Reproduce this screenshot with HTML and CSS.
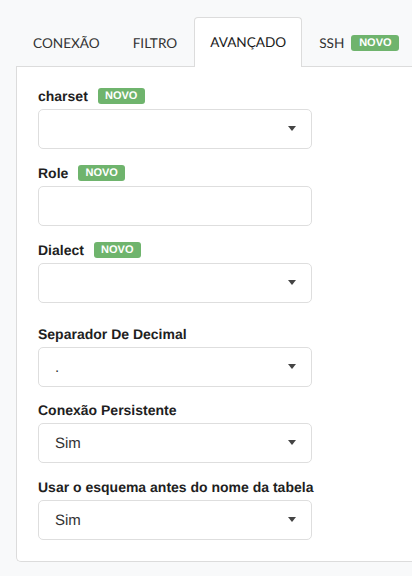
FILE: index.html
```html
<!DOCTYPE html>
<html lang="pt">
<head>
<meta charset="utf-8">
<title>Avançado</title>
<link rel="stylesheet" href="styles.css">
</head>
<body>
<div class="page">
  <ul class="tabs">
    <li class="tab">CONEXÃO</li>
    <li class="tab">FILTRO</li>
    <li class="tab active">AVANÇADO</li>
    <li class="tab">SSH<span class="badge tab-badge">NOVO</span></li>
  </ul>
  <div class="card">
    <div class="group">
      <div class="label">charset <span class="badge">NOVO</span></div>
      <div class="control select"><span class="value"></span><span class="caret"></span></div>
    </div>
    <div class="group">
      <div class="label">Role <span class="badge">NOVO</span></div>
      <div class="control"></div>
    </div>
    <div class="group">
      <div class="label">Dialect <span class="badge">NOVO</span></div>
      <div class="control select"><span class="value"></span><span class="caret"></span></div>
    </div>
    <div class="group extra">
      <div class="label">Separador De Decimal</div>
      <div class="control select"><span class="value">.</span><span class="caret"></span></div>
    </div>
    <div class="group">
      <div class="label">Conexão Persistente</div>
      <div class="control select"><span class="value">Sim</span><span class="caret"></span></div>
    </div>
    <div class="group last">
      <div class="label">Usar o esquema antes do nome da tabela</div>
      <div class="control select"><span class="value">Sim</span><span class="caret"></span></div>
    </div>
  </div>
</div>
</body>
</html>
```
FILE: styles.css
```css
html, body {
  margin: 0;
  padding: 0;
  background: #f8f9fa;
  text-rendering: geometricPrecision;
}
.page {
  padding: 17px 0 0 16px;
  overflow: hidden;
}
.tabs {
  list-style: none;
  margin: 0;
  padding: 0 0 0 1px;
  display: flex;
  gap: 1px;
}
.tab {
  font-family: Lato, "Open Sans", sans-serif;
  font-size: 13.6px;
  line-height: 20px;
  color: #333;
  padding: 14px 15px 14px 15px;
  border: 1px solid transparent;
  border-bottom: 0;
  border-radius: 4px 4px 0 0;
  display: flex;
  align-items: center;
  margin-bottom: -1px;
  position: relative;
  white-space: nowrap;
}
.tab.active {
  background: #fff;
  border-color: #dcdcdc;
  color: #1a1a1a;
  padding-bottom: 15px;
}
.badge {
  display: inline-block;
  background: #6fb46d;
  color: #fff;
  font-family: "Liberation Sans", Arial, sans-serif;
  font-weight: bold;
  font-size: 11px;
  line-height: 16px;
  height: 16px;
  width: 47px;
  text-align: center;
  border-radius: 3px;
  vertical-align: top;
  margin-top: 2px;
  margin-left: 6px;
}
.tab-badge {
  margin: 1px 0 0 7px;
  width: 48px;
}
.card {
  background: #fff;
  border: 1px solid #dcdcdc;
  border-right: 0;
  border-radius: 0 0 0 5px;
  padding: 19px 0 21px 21px;
}
.group {
  margin-bottom: 14px;
}
.group.extra {
  margin-top: 21px;
  margin-bottom: 13px;
}
.group.last {
  margin-bottom: 0;
}
.label {
  font-family: "Liberation Sans", Arial, sans-serif;
  font-weight: bold;
  font-size: 14px;
  line-height: 20px;
  height: 20px;
  color: #1f1f1f;
  margin-bottom: 3px;
  white-space: nowrap;
}
.control {
  box-sizing: border-box;
  width: 274px;
  height: 40px;
  border: 1px solid #dedede;
  border-radius: 5px;
  background: #fff;
  display: flex;
  align-items: center;
  justify-content: space-between;
  padding: 0 15px 1px 16px;
}
.value {
  font-family: "Liberation Sans", Arial, sans-serif;
  font-size: 15px;
  color: #333;
  padding-top: 2px;
}
.caret {
  width: 0;
  height: 0;
  border-left: 4px solid transparent;
  border-right: 4px solid transparent;
  border-top: 5px solid #444;
}
```
